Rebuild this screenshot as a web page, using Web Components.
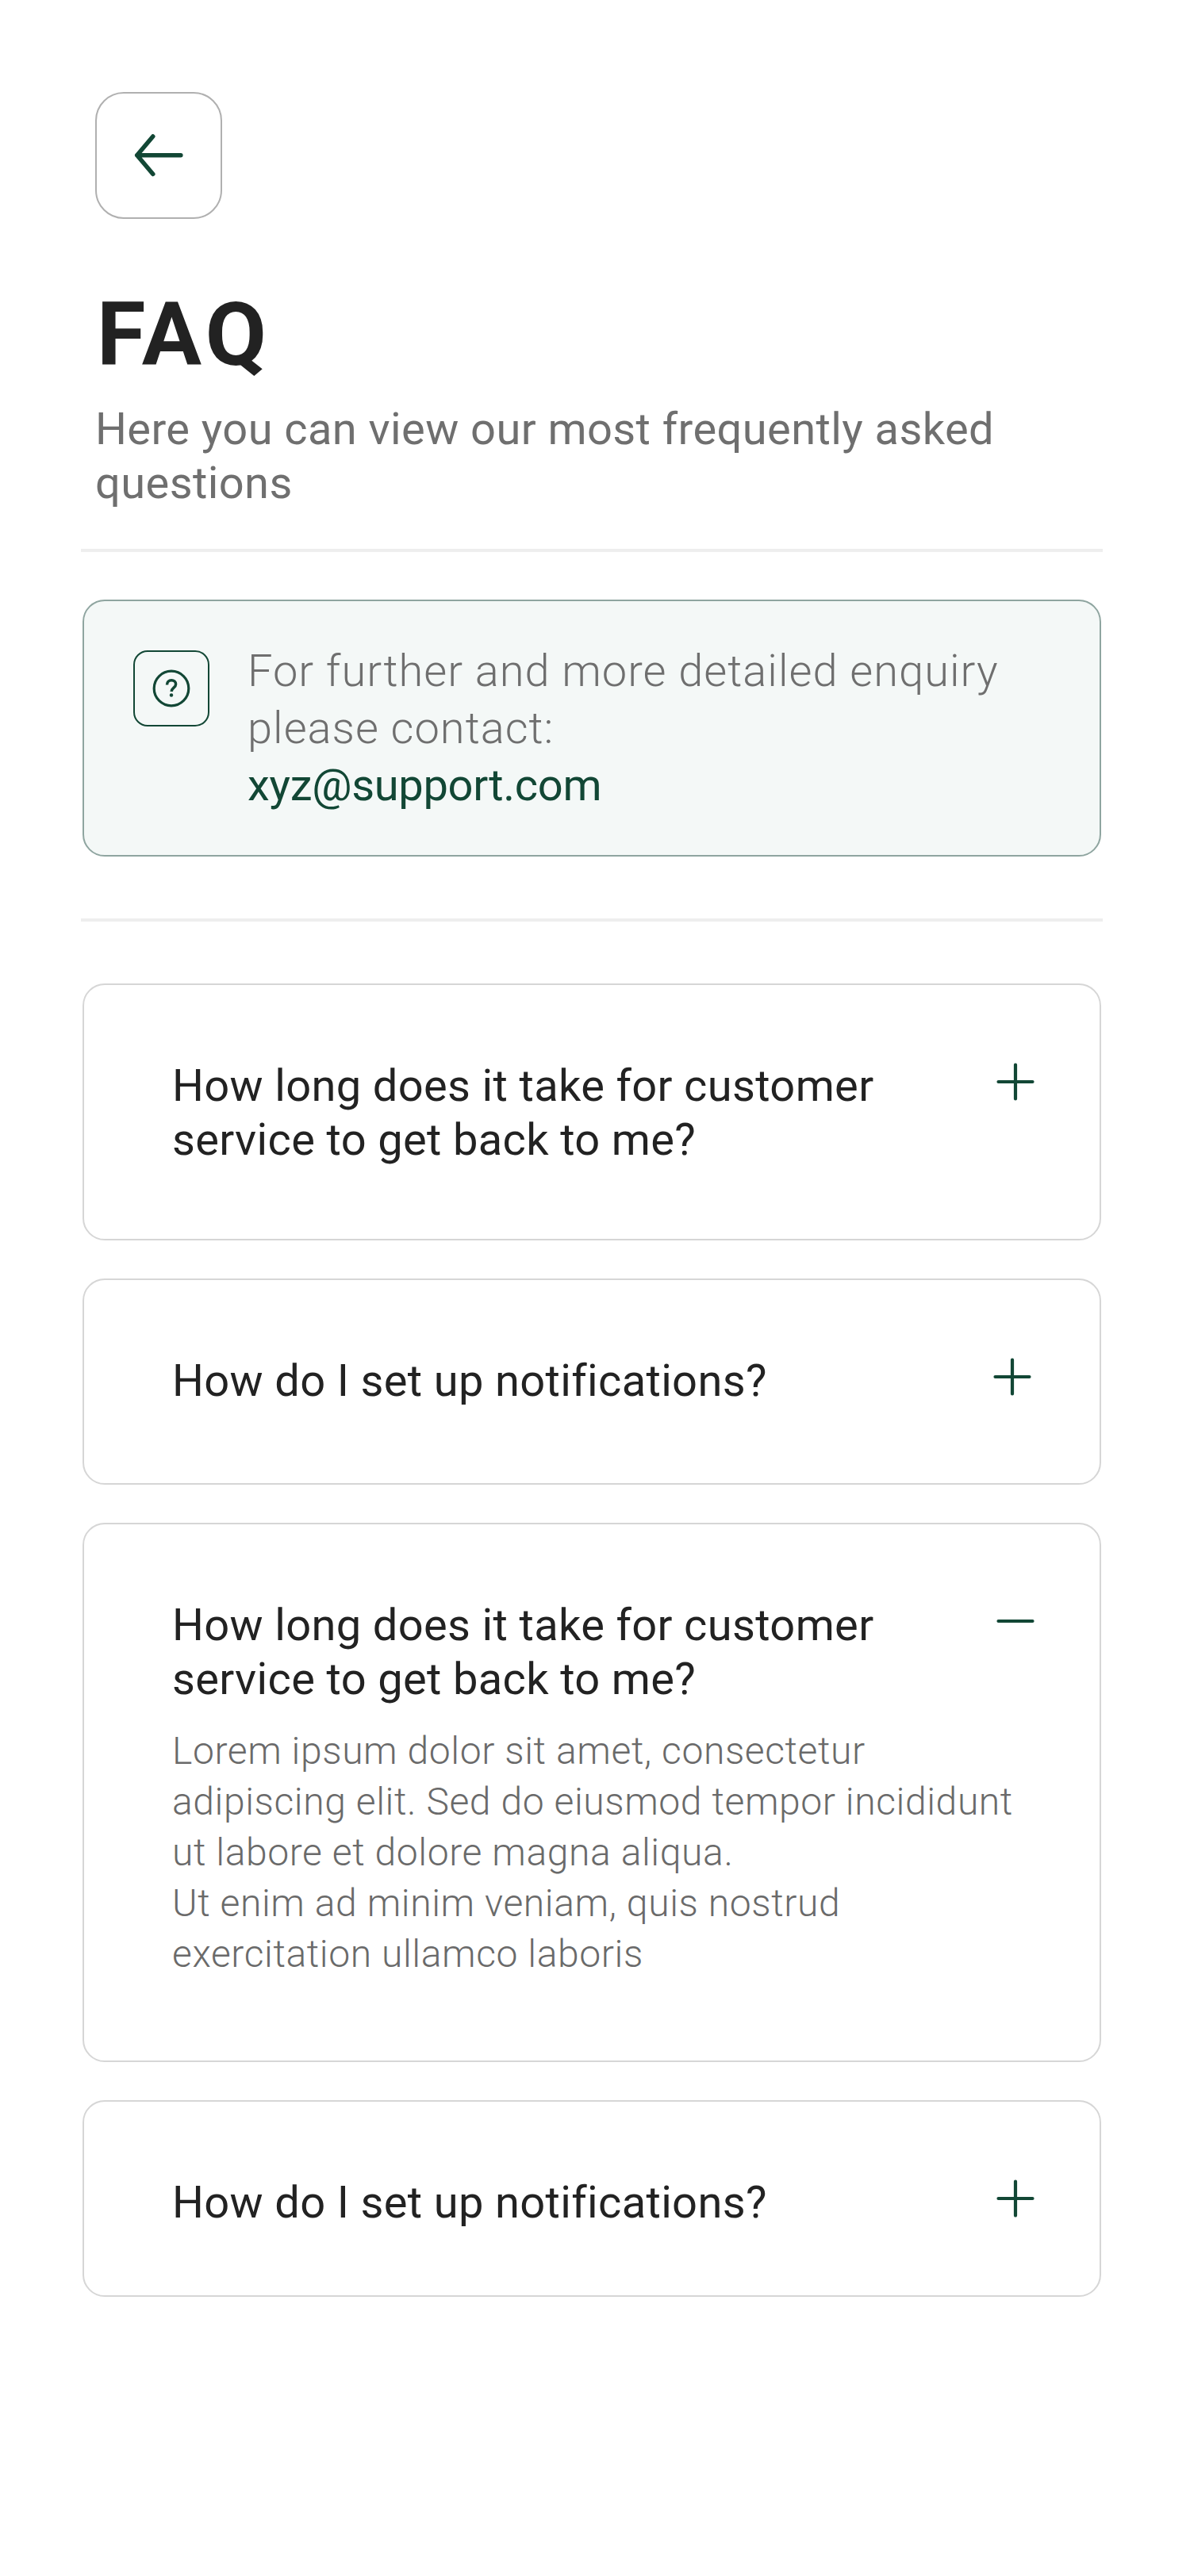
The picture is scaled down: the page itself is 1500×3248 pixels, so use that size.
<!DOCTYPE html>
<html lang="en">
<head>
<meta charset="utf-8">
<title>FAQ</title>
<style>
html,body{margin:0;padding:0;background:#fff;}
body{font-family:Roboto,"Liberation Sans",sans-serif;color:#222;}
</style>
</head>
<body>
<faq-page>
  <back-button slot="back"></back-button>
  <page-header slot="header" title="FAQ">Here you can view our most frequently asked<br>questions</page-header>
  <info-card slot="info">For further and more detailed enquiry<br>please contact:<a slot="link">xyz@support.com</a></info-card>
  <faq-item slot="items" kind="plus" style="--pb:91px">
    <span slot="q">How long does it take for customer<br>service to get back to me?</span>
  </faq-item>
  <faq-item slot="items" kind="plus" style="--pb:95px;--ix:4px">
    <span slot="q">How do I set up notifications?</span>
  </faq-item>
  <faq-item slot="items" kind="minus" style="--pb:102px">
    <span slot="q">How long does it take for customer<br>service to get back to me?</span>
    Lorem ipsum dolor sit amet, consectetur<br>adipiscing elit. Sed do eiusmod tempor incididunt<br>ut labore et dolore magna aliqua.<br>Ut enim ad minim veniam, quis nostrud<br>exercitation ullamco laboris
  </faq-item>
  <faq-item slot="items" kind="plus" style="--pb:83px">
    <span slot="q">How do I set up notifications?</span>
  </faq-item>
</faq-page>
<script>
const def=(name,html,extra)=>{
  const t=document.createElement('template');t.innerHTML=html;
  customElements.define(name,class extends HTMLElement{
    constructor(){super();this.attachShadow({mode:'open'}).appendChild(t.content.cloneNode(true));}
    connectedCallback(){extra&&extra(this);}
  });
};
def('faq-page',`<style>
:host{display:block;width:1500px;min-height:3248px;box-sizing:border-box;padding:116px 112px 0 104px;background:#fff;}
.items{display:flex;flex-direction:column;gap:48px;}
hr{border:0;height:4px;background:#eee;margin:0 -2px;}
.h1{margin:49px -2px 60px;}
.h2{margin:78px -2px 78px;}
</style>
<slot name="back"></slot><slot name="header"></slot>
<hr class="h1"><slot name="info"></slot><hr class="h2">
<div class="items"><slot name="items"></slot></div>`);
def('back-button',`<style>
:host{display:flex;width:160px;height:160px;box-sizing:border-box;margin-left:16px;border:2px solid #b0b0b0;border-radius:36px;align-items:center;justify-content:center;}
svg{display:block;width:72px;height:72px;}
</style>
<svg viewBox="0 0 72 72" fill="none" stroke="#124735" stroke-width="5.500" stroke-linecap="round" stroke-linejoin="round"><path d="M8.750 35.700H63.850M8.750 35.700 28.800 12M8.750 35.700 28.800 59.500"/></svg>`);
def('page-header',`<style>
:host{display:block;margin-left:16px;}
h1{margin:90px 0 29px 2px;font:700 112px/112px Roboto,"Liberation Sans",sans-serif;color:#222;letter-spacing:5.500px;}
p{margin:0;font:400 56px/68px Roboto,"Liberation Sans",sans-serif;color:#6f6f6f;letter-spacing:.42px;}
</style><h1></h1><p><slot></slot></p>`,el=>{el.shadowRoot.querySelector('h1').textContent=el.getAttribute('title');});
def('info-card',`<style>
:host{display:flex;box-sizing:border-box;gap:48px;padding:52px 40px 52px 62px;border:2px solid #8fa5a0;border-radius:28px;background:#f4f8f7;}
.ic{flex:none;width:96px;height:96px;margin-top:10px;box-sizing:border-box;border:2px solid #124735;border-radius:18px;}
.ic svg{display:block;width:92px;height:92px;}
.t{font:300 56px/72px Roboto,"Liberation Sans",sans-serif;color:#6f6f6f;letter-spacing:1px;}
::slotted(a){display:block;color:#124735;font-weight:400;letter-spacing:-.3px;}
</style>
<div class="ic"><svg viewBox="2 2 92 92" fill="none" stroke="#124735"><circle cx="48" cy="48" r="21.8" stroke-width="3.2"/><path d="M42.500 43.500c0-3.600 2.400-5.700 5.600-5.700 3.200 0 5.500 2 5.500 5 0 4.400-5.400 4.400-5.400 9.200" stroke-width="3.500"/><circle cx="48" cy="56.500" r="2.200" fill="#124735" stroke="none"/></svg></div>
<div class="t"><slot></slot><slot name="link"></slot></div>`);
def('faq-item',`<style>
:host{display:block;box-sizing:border-box;padding:93px 82px var(--pb,93px) 111px;border:2px solid #d6d6d6;border-radius:28px;background:#fff;}
.row{display:flex;justify-content:space-between;align-items:flex-start;}
.q{font:400 56px/68px Roboto,"Liberation Sans",sans-serif;color:#222;letter-spacing:.35px;}
svg{flex:none;display:block;width:48px;height:48px;margin:5px var(--ix,0px) 0 0;}
.a{font:300 48px/64px Roboto,"Liberation Sans",sans-serif;color:#6a6a6a;letter-spacing:.6px;}
.a.has{margin-top:25px;}
</style>
<div class="row"><div class="q"><slot name="q"></slot></div>
<svg viewBox="0 0 48 48" fill="none" stroke="#124735" stroke-width="4.200" stroke-linecap="round"></svg></div>
<div class="a"><slot></slot></div>`,el=>{
  const r=el.shadowRoot;
  r.querySelector('svg').innerHTML=el.getAttribute('kind')==='minus'?'<path d="M2.500 24H45.500"/>':'<path d="M2.500 24H45.500M24 2.500V45.500"/>';
  if(el.getAttribute('kind')==='minus')r.querySelector('.a').classList.add('has');
});
</script>
</body>
</html>
